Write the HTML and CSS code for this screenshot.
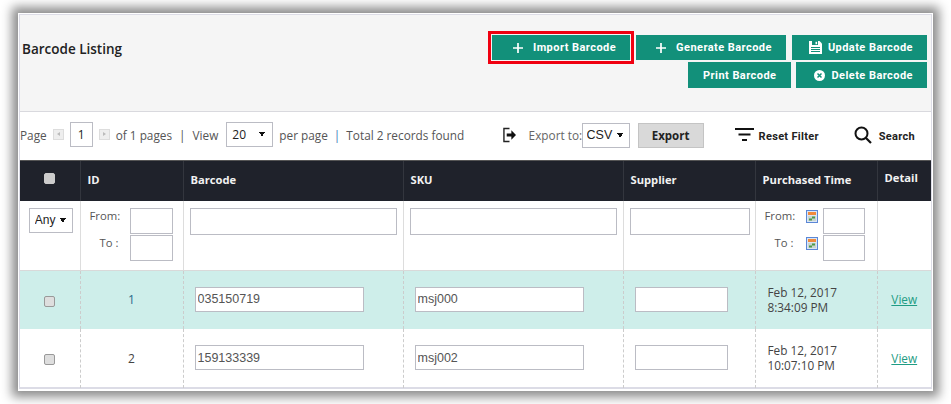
FILE: index.html

```html
<!DOCTYPE html>
<html lang="en">
<head>
    <meta charset="UTF-8">
    <title>Barcode Listing</title>
    <link rel="stylesheet" href="styles.css">
</head>
<body>
    <div class="frame">
        <div class="panel">
            <div class="page-head">
                <h2>Barcode Listing</h2>
                <div class="actions">
                    <div class="btn-row">
                        <a class="btn btn-import highlighted">
                            <svg class="ico-plus" viewBox="0 0 10 10"><path d="M5 0v10M0 5h10" stroke="#fff" stroke-width="1.7"/></svg>
                            Import Barcode
                        </a>
                        <a class="btn btn-generate">
                            <svg class="ico-plus" viewBox="0 0 10 10"><path d="M5 0v10M0 5h10" stroke="#fff" stroke-width="1.7"/></svg>
                            Generate Barcode
                        </a>
                        <a class="btn btn-update">
                            <svg class="ico-save" viewBox="0 0 13 13"><path d="M0 0h10.500L13 2.500V13H0z" fill="#fff"/><path d="M3 0h6v4H3z" fill="#12907a"/><path d="M6.500 .8h1.600v2.400H6.500z" fill="#fff"/><path d="M2 6.500h9M2 8.500h9M2 10.500h9" stroke="#12907a" stroke-width="1"/></svg>
                            Update Barcode
                        </a>
                    </div>
                    <div class="btn-row btn-row-low">
                        <a class="btn btn-print">Print Barcode</a>
                        <a class="btn btn-delete">
                            <svg class="ico-del" viewBox="0 0 11 11"><circle cx="5.500" cy="5.500" r="5.500" fill="#fff"/><path d="M3.500 3.500l4 4M7.500 3.500l-4 4" stroke="#12907a" stroke-width="1.500"/></svg>
                            Delete Barcode
                        </a>
                    </div>
                </div>
            </div>

            <div class="toolbar">
                <div class="pager">
                    <span>Page</span>
                    <span class="page-arrow prev"></span>
                    <input class="page-input" type="text" value="1">
                    <span class="page-arrow next"></span>
                    <span>of 1 pages</span>
                    <span class="sep">|</span>
                    <span>View</span>
                    <select class="view-select"><option>20</option></select>
                    <span>per page</span>
                    <span class="sep sep-blue">|</span>
                    <span>Total 2 records found</span>
                </div>
                <div class="tools">
                    <svg class="ico-export" viewBox="0 0 14 16"><path d="M7 1H1v14h6" fill="none" stroke="#222" stroke-width="1.500"/><path d="M4 6.500h5V3l5 5-5 5V9.500H4z" fill="#111"/></svg>
                    <span class="export-label">Export to:</span>
                    <select class="csv-select"><option>CSV</option></select>
                    <button class="export-btn" type="button">Export</button>
                    <svg class="ico-filter" viewBox="0 0 19 14"><path d="M0 1h19M3.500 6.500h12M7 12h5" stroke="#111" stroke-width="2.200"/></svg>
                    <span class="tool-link">Reset Filter</span>
                    <svg class="ico-search" viewBox="0 0 18 18"><circle cx="7.500" cy="7.500" r="6" fill="none" stroke="#111" stroke-width="2"/><path d="M12 12l5 5" stroke="#111" stroke-width="2.200"/></svg>
                    <span class="tool-link">Search</span>
                </div>
            </div>

            <table class="grid">
                <colgroup>
                    <col class="c-check"><col class="c-id"><col class="c-code"><col class="c-code">
                    <col class="c-supplier"><col class="c-time"><col class="c-detail">
                </colgroup>
                <thead>
                    <tr>
                        <th class="center"><input class="check check-head" type="checkbox"></th>
                        <th>ID</th>
                        <th>Barcode</th>
                        <th>SKU</th>
                        <th>Supplier</th>
                        <th>Purchased Time</th>
                        <th class="th-detail">Detail</th>
                    </tr>
                </thead>
                <tbody>
                    <tr class="filters">
                        <td class="center"><select class="any-select"><option>Any</option></select></td>
                        <td>
                            <div class="range"><span class="range-label">From:</span><input type="text"></div>
                            <div class="range"><span class="range-label to">To :</span><input type="text"></div>
                        </td>
                        <td><input class="wide" type="text"></td>
                        <td><input class="wide" type="text"></td>
                        <td class="f-supplier"><input class="wide" type="text"></td>
                        <td>
                            <div class="range range-date">
                                <span class="range-label">From:</span>
                                <svg class="ico-cal" viewBox="0 0 12 13"><rect x=".5" y=".5" width="11" height="12" fill="#dbe6f5" stroke="#5b87d6"/><rect x="2" y="2" width="8" height="3" fill="#f08a3c"/><rect x="2" y="6" width="8" height="5" fill="#c9d5d0"/><rect x="6" y="6.500" width="3" height="2" fill="#4d9a4a"/><rect x="3" y="8.500" width="3" height="2" fill="#4d9a4a"/></svg>
                                <input type="text">
                            </div>
                            <div class="range range-date">
                                <span class="range-label to">To :</span>
                                <svg class="ico-cal" viewBox="0 0 12 13"><rect x=".5" y=".5" width="11" height="12" fill="#dbe6f5" stroke="#5b87d6"/><rect x="2" y="2" width="8" height="3" fill="#f08a3c"/><rect x="2" y="6" width="8" height="5" fill="#c9d5d0"/><rect x="6" y="6.500" width="3" height="2" fill="#4d9a4a"/><rect x="3" y="8.500" width="3" height="2" fill="#4d9a4a"/></svg>
                                <input type="text">
                            </div>
                        </td>
                        <td></td>
                    </tr>
                    <tr class="data selected">
                        <td class="center"><input class="check" type="checkbox"></td>
                        <td class="center num">1</td>
                        <td class="pad"><input class="code" type="text" value="035150719"></td>
                        <td class="pad"><input class="code" type="text" value="msj000"></td>
                        <td class="pad"><input class="sup" type="text"></td>
                        <td class="when">Feb 12, 2017<br>8:34:09 PM</td>
                        <td class="center"><a class="view">View</a></td>
                    </tr>
                    <tr class="data">
                        <td class="center"><input class="check" type="checkbox"></td>
                        <td class="center num">2</td>
                        <td class="pad"><input class="code" type="text" value="159133339"></td>
                        <td class="pad"><input class="code" type="text" value="msj002"></td>
                        <td class="pad"><input class="sup" type="text"></td>
                        <td class="when">Feb 12, 2017<br>10:07:10 PM</td>
                        <td class="center"><a class="view">View</a></td>
                    </tr>
                </tbody>
            </table>
        </div>
    </div>
</body>
</html>
```

FILE: styles.css

```css
html, body { margin: 0; height: 404px; overflow: hidden; background: #fff; }
body { font-family: "Open Sans", sans-serif; font-size: 12px; color: #444; padding-top: 13px; box-sizing: border-box; }

.frame { width: 915px; height: 378px; margin-left: 18px; padding: 1px 1px 2px; box-sizing: border-box; background: #fff; box-shadow: 0 0 10px 6px #8c8c8c; }
.panel { height: 375px; border: 1px solid #dcdce6; border-width: 1px 1px 2px 1px; box-sizing: border-box; }

/* header */
.page-head { height: 96px; background: #f5f5f5; border-bottom: 1px solid #d9d9de; display: flex; justify-content: space-between; padding-left: 2px; }
.page-head h2 { margin: 25px 0 0; font-size: 13.500px; font-weight: 600; line-height: 19px; color: #222; }
.actions { padding: 20px 4px 0 0; }
.btn-row { display: flex; justify-content: flex-end; gap: 6px; }
.btn-row-low { gap: 5px; margin-top: 2px; }
.btn { display: flex; align-items: center; height: 25px; background: #12907a; color: #fff; font-family: Roboto, sans-serif; font-size: 11px; font-weight: 700; letter-spacing: .45px; white-space: nowrap; }
.btn-row-low .btn { height: 26px; }
.btn-import { padding: 0 14px 0 21px; }
.btn-generate { padding: 0 14px 0 20px; }
.btn-update { padding: 0 14px 0 17px; }
.btn-print { padding: 0 15px; }
.btn-delete { padding: 0 14px 0 18px; }
.highlighted { outline: 3px solid #f00010; outline-offset: 1px; }
.ico-plus { width: 10px; height: 10px; margin-right: 10px; }
.ico-save { width: 13px; height: 13px; margin-right: 6px; }
.ico-del { width: 11px; height: 11px; margin-right: 6px; }

/* toolbar */
.toolbar { height: 46px; padding-bottom: 2px; display: flex; justify-content: space-between; align-items: center; }
.pager, .tools { display: flex; align-items: center; white-space: nowrap; }
.pager { color: #555; font-size: 11.800px; margin-top: -1px; }
.page-arrow { width: 9px; height: 9px; border: 1px solid #ddd; background: #eee; margin: 0 6px; position: relative; }
.page-arrow::after { content: ""; position: absolute; left: 3px; top: 2px; border: 2.500px solid transparent; border-left: 0; border-right: 3px solid #bbb; }
.page-arrow.next::after { border-right: 0; border-left: 3px solid #bbb; }
.page-input { width: 23px; height: 25px; box-sizing: border-box; border: 1px solid #bbbcc4; text-align: center; padding: 0; font: 12px "Open Sans", sans-serif; color: #222; }
.sep { margin: 0 7px; }
.sep-blue { margin: 0 6px; color: #3a78b8; }

/* triangle drawn with two gradients */
select { appearance: none; box-sizing: border-box; border: 1px solid #bbbcc4; border-radius: 0; background-color: #fff; background-image: linear-gradient(to top right, transparent 50%, #111 50%), linear-gradient(to top left, transparent 50%, #111 50%); background-size: 3px 5px; background-repeat: no-repeat; color: #222; }
.view-select { width: 47px; height: 25px; margin: 0 6px 0 8px; padding-left: 5px; font: 12px "Open Sans", sans-serif; background-position: right 10px top 9px, right 7px top 9px; }
.csv-select { width: 48px; height: 25px; padding-left: 4px; font: 12.500px "Liberation Sans", sans-serif; background-position: right 9px top 9px, right 6px top 9px; }
.any-select { width: 44px; height: 25px; padding-left: 5px; font: 12px "Liberation Sans", sans-serif; background-position: right 9px top 9px, right 6px top 9px; }

.tools { padding-right: 16px; }
.ico-export { width: 13px; height: 16px; margin-right: 13px; }
.export-label { width: 53px; color: #666; font-size: 11.800px; }
.export-btn { width: 66px; height: 25px; margin-left: 8px; border: 1px solid #c4c4c4; background: #d9d9d9; font-family: "Open Sans", sans-serif; font-size: 11.500px; font-weight: 700; color: #222; padding: 0; }
.ico-filter { width: 19px; height: 14px; margin: 0 5px 0 31px; }
.tool-link { font-family: Roboto, sans-serif; font-size: 11px; font-weight: 700; letter-spacing: .3px; color: #222; padding-top: 2px; }
.ico-search { width: 18px; height: 18px; margin: 0 7px 0 35px; }

/* table */
.grid { width: 911px; table-layout: fixed; border-collapse: collapse; }
.c-check { width: 60px; }
.c-id { width: 103px; }
.c-code { width: 220px; }
.c-supplier { width: 132px; }
.c-time { width: 122px; }
.c-detail { width: 54px; }
.grid th { height: 40px; box-sizing: border-box; background: #1f222b; color: #f2f2f2; font-size: 11.200px; font-weight: 700; text-align: left; padding: 0 7px 3px; border-left: 1px solid #33363e; border-top: 1px solid #555; }
.grid th:first-child { border-left: 0; }
.grid th.center { text-align: center; padding: 0 0 8px; }
.grid th.th-detail { padding: 0 0 6px 7px; }
.grid td { box-sizing: border-box; border-left: 1px solid #ddd; vertical-align: middle; padding: 0; }
.grid td:first-child { border-left: 0; }
.center { text-align: center; }

.filters td { height: 70px; vertical-align: top; padding: 7px 6px 0; border-bottom: 1px solid #d9d9d9; }
.filters td.center { padding: 7px 0 0 2px; }
.filters td.f-supplier { padding-right: 5px; }
input[type=text] { box-sizing: border-box; border: 1px solid #bbbcc4; background: #fff; border-radius: 0; outline: 0; }
.wide { display: block; width: 100%; height: 27px; margin: 0; }
.range { display: flex; height: 27px; align-items: flex-start; white-space: nowrap; }
.range input { width: 43px; height: 26px; margin: 0 4px 0 auto; }
.range-label { margin-left: 3px; line-height: 16px; font-size: 11.300px; color: #555; }
.range-label.to { margin-left: 13px; }
.range-date input { width: 42px; margin: 0 6px 0 0; }
.ico-cal { width: 12px; height: 13px; margin: 2px 5px 0 auto; }

.data td { height: 59px; border-left: 1px dashed #ccc; }
.data.selected td { height: 58px; }
.data td:first-child { border-left: 0; }
.selected { background: #ceeeea; }
.pad { padding: 0 0 1px 11px !important; }
.code { display: block; width: 169px; height: 25px; padding: 0 2px; font: 12.500px "Liberation Sans", sans-serif; color: #555; }
.sup { display: block; width: 93px; height: 25px; }
.num { font-size: 12px; color: #444; }
.selected .num { color: #2a6a8a; }
.when { padding-left: 12px !important; font-size: 11.800px; line-height: 15px; color: #444; }
.view { color: #1f9c84; text-decoration: underline; font-size: 11.800px; }

.check { appearance: none; display: inline-block; width: 9px; height: 9px; margin: 0; box-sizing: content-box; background: #dedede; border: 1px solid #999; border-radius: 2px; vertical-align: middle; }
.check-head { background: #ccc; border-color: #ccc; }
```
